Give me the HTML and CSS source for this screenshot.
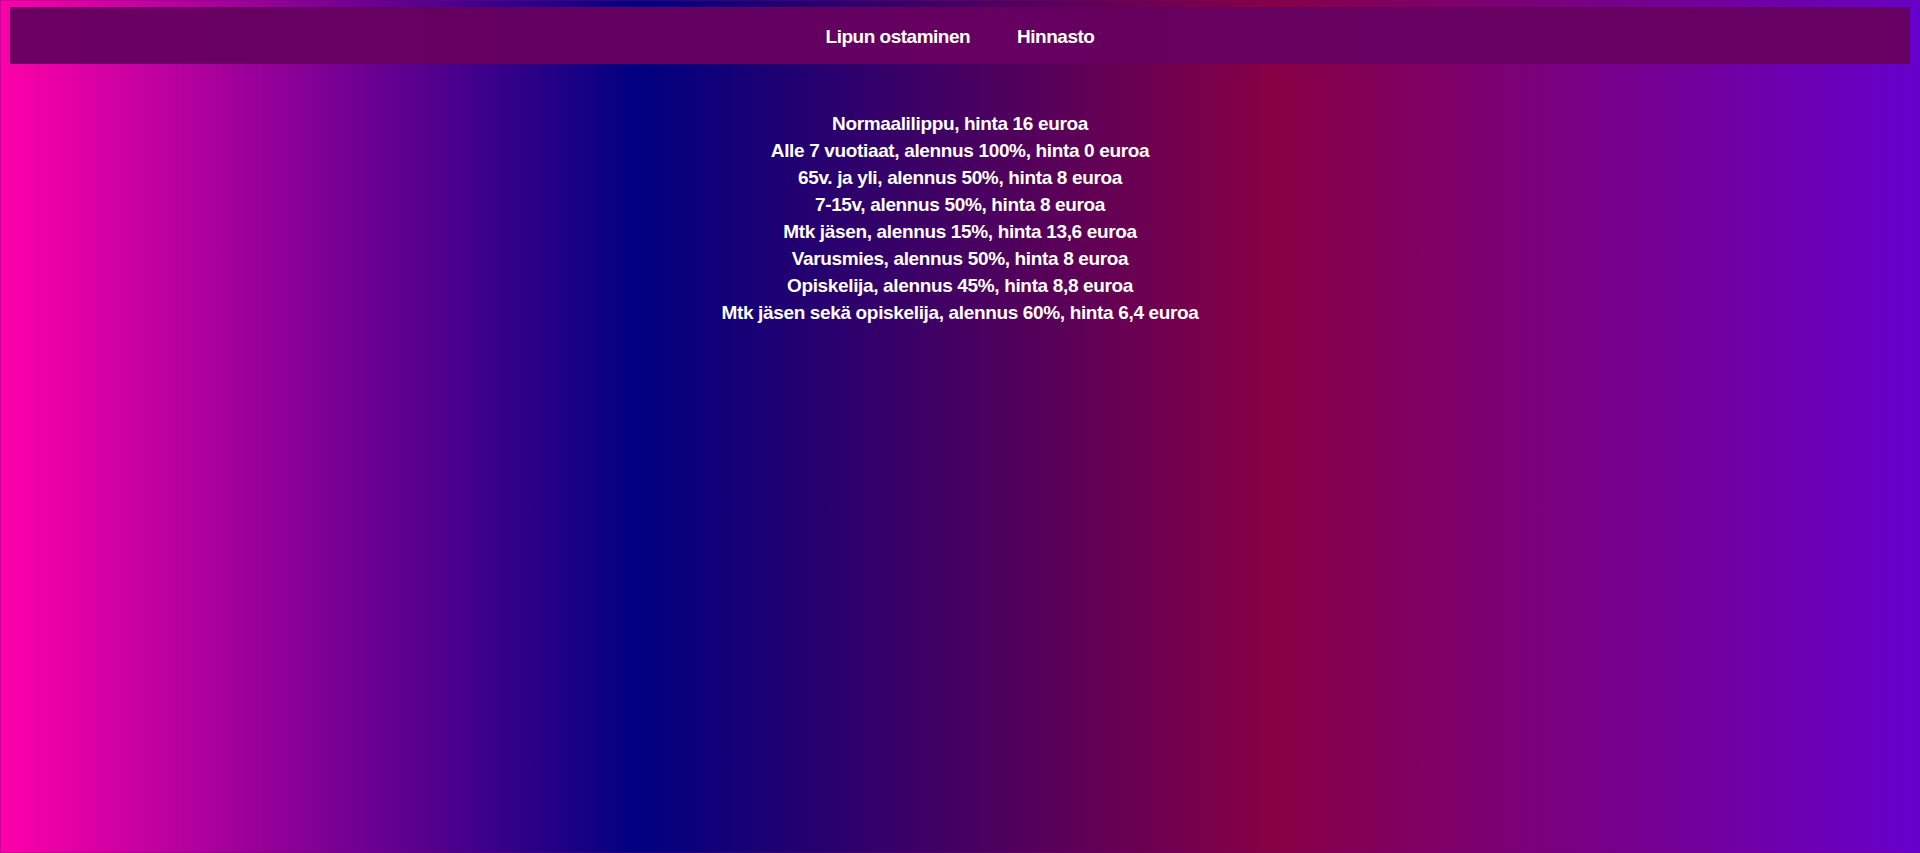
FILE: index.html
```html
<!DOCTYPE html>
<html lang="fi">
<head>
<meta charset="utf-8">
<title>Hinnasto</title>
<link rel="stylesheet" href="styles.css">
</head>
<body>
<nav class="topnav">
  <a class="navlink" href="#">Lipun ostaminen</a>
  <a class="navlink" href="#">Hinnasto</a>
</nav>
<main class="prices">
  <p class="price">Normaalilippu, hinta 16 euroa</p>
  <p class="price">Alle 7 vuotiaat, alennus 100%, hinta 0 euroa</p>
  <p class="price">65v. ja yli, alennus 50%, hinta 8 euroa</p>
  <p class="price">7-15v, alennus 50%, hinta 8 euroa</p>
  <p class="price">Mtk jäsen, alennus 15%, hinta 13,6 euroa</p>
  <p class="price">Varusmies, alennus 50%, hinta 8 euroa</p>
  <p class="price">Opiskelija, alennus 45%, hinta 8,8 euroa</p>
  <p class="price">Mtk jäsen sekä opiskelija, alennus 60%, hinta 6,4 euroa</p>
</main>
</body>
</html>
```
FILE: styles.css
```css
html {
  height: 100%;
}
body {
  margin: 0;
  min-height: 100%;
  box-sizing: border-box;
  border: 1px solid rgba(120, 0, 120, 0.35);
  background: linear-gradient(to right, #ff00aa 0%, #000080 33.3%, #880044 66.4%, #6600cc 100%);
  font-family: "Liberation Sans", Arial, sans-serif;
  font-weight: bold;
  color: #ffffff;
}
.topnav {
  margin: 6px 9px 0;
  height: 57px;
  box-sizing: border-box;
  padding-top: 2px;
  background: rgba(102, 0, 96, 0.97);
  display: flex;
  justify-content: center;
  align-items: center;
  gap: 47px;
}
.navlink {
  color: #ffffff;
  text-decoration: none;
  font-size: 19px;
  letter-spacing: -0.5px;
}
.prices {
  margin-top: 46px;
  text-align: center;
  font-size: 19px;
  line-height: 27px;
  letter-spacing: -0.35px;
}
.price {
  margin: 0;
}
```
